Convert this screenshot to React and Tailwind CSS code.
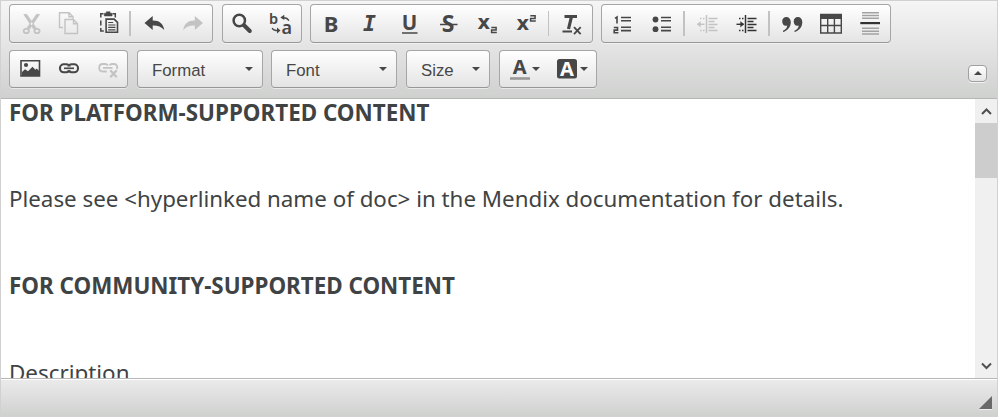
import React from "react";

const INK = "#474747";
const PALE = "#c3c3c3";

// Every icon is drawn in toolbar coordinates; x/y/w/h select its button cell.
function Icon({ x, y = 5, w = 39, h = 37, label, children }) {
  return (
    <button type="button" aria-label={label} className="block shrink-0">
      <svg width={w} height={h} viewBox={`${x} ${y} ${w} ${h}`} className="block overflow-visible" fill="none" stroke={INK}>
        {children}
      </svg>
    </button>
  );
}

const faces = {
  noto: "font-bold font-['Noto_Sans',sans-serif]",
  dejavu: "font-bold font-['DejaVu_Sans',sans-serif]",
  mono: "font-bold italic font-['DejaVu_Sans_Mono',monospace]",
};

function Glyph({ x, y, size, children, color = INK, face = "noto" }) {
  return (
    <text x={x} y={y} fontSize={size} fill={color} stroke="none" className={faces[face]}>
      {children}
    </text>
  );
}

const Sep = () => <span className="h-[25px] w-[2px] shrink-0 self-center bg-[#c2c2c2]" />;

const box =
  "flex shrink-0 items-center rounded-[4px] border border-[#a6a6a6] border-b-[#979797] bg-linear-to-b from-white to-[#e4e4e4] shadow-[0_1px_0_rgba(255,255,255,.5)]";

const Arrow = () => (
  <span className="h-0 w-0 border-x-4 border-t-4 border-x-transparent border-t-[#474747]" />
);

function Combo({ label, className }) {
  return (
    <button type="button" className={`${box} ${className} h-[38px] justify-between pl-[14px] pr-[9px] font-['Liberation_Sans',Arial,sans-serif] text-[16.8px] text-[#474747]`}>
      <span className="pt-[3px]">{label}</span>
      <Arrow />
    </button>
  );
}

function Indent({ x, color, right }) {
  return (
    <g stroke={color} strokeWidth="1.4">
      <path d={`M${x} 15v18`} strokeWidth="1.5" />
      <path d={`M${x + 2} 18.5h9M${x + 2} 21.5h6M${x + 2} 24.5h9M${x + 2} 27.5h6M${x + 2} 30.5h9`} />
      <path d={`M${x - 6.5} 18.5h5M${x - 6.5} 30.5h5`} strokeDasharray="1.5 1.5" />
      <path d={`M${x - 9} 24.3h7`} />
      <path
        d={right ? `M${x - 5} 21.5l3.5 2.8l-3.5 2.8z` : `M${x - 6} 21.5l-3.5 2.8l3.5 2.8z`}
        fill={color}
        strokeWidth=".3"
      />
    </g>
  );
}

export default function App() {
  return (
    <div className="flex h-[417px] w-[998px] flex-col overflow-hidden border border-[#d1d1d1] bg-white">
      <header className="flex h-[98px] shrink-0 flex-col gap-[7px] border-b border-[#b6b6b6] bg-linear-to-b from-[#f5f5f5] to-[#cfd1cf] px-2 pt-[3px]">
        <div className="flex">
          <div className={`${box} h-[39px] w-[204px] pl-[2px]`}>
            <Icon x={12} label="Cut">
              <g stroke={PALE} strokeWidth="1.8">
                <path d="M23.8 14.5l2.8-.3l9.7 14l-2.6 1zM39.5 14.5l-2.8-.3L27 28l2.6 1z" fill={PALE} strokeWidth=".7" />
                <ellipse cx="26.3" cy="31" rx="2.6" ry="2.2" />
                <ellipse cx="37" cy="31" rx="2.6" ry="2.2" />
              </g>
            </Icon>
            <Icon x={51} label="Copy">
              <g stroke={PALE} strokeWidth="1.4">
                <path d="M63 27.5h-3.5V12.7h9.5l4 4v2M69 12.7v4h4" />
                <path d="M65 19.5h8.5l4 4.2v9.8H65zM73.5 19.5v4.2h4" />
              </g>
            </Icon>
            <Icon x={90} label="Paste">
              <path d="M103.5 13.8h-2.7v3.7M100.8 20.5v5M100.8 28v3h3M112.5 13.8h2.8v3.7" strokeWidth="1.5" />
              <path d="M104.3 16v-2.7h2v-1.5h3.8v1.5h2V16z" fill={INK} strokeWidth=".5" />
              <path d="M106.1 19.1h8l3.4 3.2v10h-11.4z" strokeWidth="1.6" />
              <path d="M108.2 22.5h5M108.2 25h7.3M108.2 27.4h7.3M108.2 29.9h7.3" strokeWidth="1.2" />
            </Icon>
            <Sep />
            <Icon x={131} label="Undo">
              <path d="M144.5 23l8.2-7v4.4c6.5-.1 10.8 3.2 11.5 9.5c-3-3.6-6.8-4.7-11.5-4.5V30z" fill={INK} stroke="none" />
            </Icon>
            <Icon x={170} label="Redo">
              <path d="M203 23l-8.2-7v4.4c-6.5-.1-10.8 3.2-11.5 9.5c3-3.6 6.8-4.7 11.5-4.5V30z" fill={PALE} stroke="none" />
            </Icon>
          </div>

          <div className={`${box} ml-[9px] h-[39px] w-[80px]`}>
            <Icon x={223} label="Find">
              <circle cx="239.3" cy="20.5" r="5.7" strokeWidth="2.5" />
              <path d="M244 25.3l5.8 5.7" strokeWidth="4" strokeLinecap="round" />
            </Icon>
            <Icon x={262} label="Replace">
              <Glyph x={269} y={23.7} size={14.5}><tspan className="font-semibold">b</tspan></Glyph>
              <Glyph x={281.6} y={34.3} size={18}><tspan className="font-semibold">a</tspan></Glyph>
              <path d="M282.5 17.8c3.5-.2 5.5 1 6.3 3M272.2 28c.5 2 2.5 2.6 6 2.6" strokeWidth="1.4" />
              <path d="M280.3 17.5l4-2.8v5.4zM280.5 30.5l-3.5-3v6z" fill={INK} stroke="none" />
            </Icon>
          </div>

          <div className={`${box} ml-[8px] h-[39px] w-[283px]`}>
            <Icon x={311} label="Bold"><Glyph x={323.7} y={31.5} size={22}>B</Glyph></Icon>
            <Icon x={350} label="Italic"><Glyph x={363} y={31.3} size={21.5} face="mono">I</Glyph></Icon>
            <Icon x={389} label="Underline">
              <Glyph x={401.8} y={29.7} size={20.5}>U</Glyph>
              <path d="M402 33h15.5" strokeWidth="1.5" />
            </Icon>
            <Icon x={428} label="Strikethrough">
              <Glyph x={441.8} y={31.6} size={23}>S</Glyph>
              <path d="M440 24.5h17.5" strokeWidth="1.5" />
            </Icon>
            <Icon x={467} label="Subscript">
              <Glyph x={477.5} y={29} size={19.5} face="dejavu">x</Glyph>
              <path d="M491.3 27.5h4.8v2.6h-4.5v2.5h5.2" strokeWidth="1.5" />
            </Icon>
            <Icon x={506} w={42} label="Superscript">
              <Glyph x={516.5} y={30.3} size={19.5} face="dejavu">x</Glyph>
              <path d="M530.3 15.8h4.8v2.6h-4.5v2.5h5.2" strokeWidth="1.5" />
            </Icon>
            <span className="h-[25px] w-px shrink-0 bg-[#c2c2c2]" />
            <Icon x={549} label="Remove format">
              <path d="M564.5 16.5h12.5M571.5 16.5l-3 12.5" strokeWidth="3.2" />
              <path d="M562.5 31.5h9.5M574 27.2l6.7 7M580.7 27.2l-6.7 7" strokeWidth="1.8" />
            </Icon>
          </div>

          <div className={`${box} ml-[8px] h-[39px] w-[290px]`}>
            <Icon x={602} label="Numbered list">
              <path d="M615 18.3l2-1.3v6.5M613.8 27.5h3.7v2.6h-3.3v2.7h4.2" strokeWidth="1.6" />
              <path d="M621 17.5h10M621 20.7h10M621 27.3h10M621 30.6h10" strokeWidth="1.6" />
            </Icon>
            <Icon x={641} w={42} label="Bulleted list">
              <circle cx="655.5" cy="19.5" r="2.9" fill={INK} stroke="none" />
              <circle cx="655.5" cy="29.2" r="2.9" fill={INK} stroke="none" />
              <path d="M661 17.5h10M661 20.7h10M661 27.3h10M661 30.6h10" strokeWidth="1.6" />
            </Icon>
            <Sep />
            <Icon x={685} label="Decrease indent"><Indent x={706.5} color={PALE} /></Icon>
            <Icon x={724} w={44} label="Increase indent"><Indent x={745.5} color="#333" right /></Icon>
            <Sep />
            <Icon x={770} label="Block quote">
              {[782, 793.5].map((x) => (
                <path key={x} transform={`translate(${x} 17)`} d="M4.3 0C7 0 8.8 2 8.8 5c0 4.7-3 8.8-7.8 10v-1.2c2.7-1.2 4.2-3.3 4.2-5.3C2.2 9.7.2 7.2.2 4.2C.2 1.7 2 0 4.3 0z" fill={INK} stroke="none" />
              ))}
            </Icon>
            <Icon x={809} label="Table">
              <path d="M820.7 14.5h20.6V33H820.7zM820.7 25.5h20.6M827.7 19v14M834.4 19v14" strokeWidth="1.4" />
              <path d="M820 14h22v5h-22z" fill={INK} stroke="none" />
            </Icon>
            <Icon x={848} label="Horizontal line">
              <path d="M862 12.7h17M862 15.5h17M862 18.3h17M862 28.3h17M862 31.2h17M862 34h17" stroke="#a2a2a2" strokeWidth="1.4" />
              <path d="M860.3 23.1h19.7" stroke="#333" strokeWidth="2.2" />
            </Icon>
          </div>
        </div>

        <div className="flex">
          <div className={`${box} h-[38px] w-[119px]`}>
            <Icon x={10} y={51} h={36} label="Image">
              <path d="M21 60.8h18.5V76H21z" strokeWidth="1.6" />
              <circle cx="26" cy="65" r="2.1" fill={INK} stroke="none" />
              <path d="M22 76v-4l3-2.7l3 2l4.5-4.6l2.8 3l1.5-1.2l2.3 2.5v5z" fill={INK} stroke="none" />
            </Icon>
            <Icon x={49} y={51} h={36} label="Link">
              <rect x="60" y="64.3" width="10" height="8" rx="3.8" strokeWidth="2.1" />
              <rect x="68" y="64.3" width="10" height="8" rx="3.8" strokeWidth="2.1" />
              <path d="M64 68.3h10" stroke="#f5f5f5" strokeWidth="3.6" />
              <path d="M64 68.3h10" strokeWidth="1.7" />
            </Icon>
            <Icon x={88} y={51} h={36} label="Unlink">
              <g stroke={PALE}>
                <path d="M108 65.5c-.8-1-1.6-1.5-3-1.5h-2.2c-4.8 0-4.8 7.5 0 7.5h4M109.5 65.3c.6-.9 1.4-1.3 2.5-1.3h1.8c3.4 0 4.2 3.4 2.8 5M103 67.8h9.5" strokeWidth="1.8" />
                <path d="M110.3 70.3l6.4 7M116.7 70.3l-6.4 7" strokeWidth="2.2" />
              </g>
            </Icon>
          </div>
          <Combo label="Format" className="ml-[9px] w-[126px]" />
          <Combo label="Font" className="ml-[8px] w-[126px]" />
          <Combo label="Size" className="ml-[9px] w-[84px]" />
          <div className={`${box} ml-[9px] h-[38px] w-[98px]`}>
            <Icon x={500} y={51} w={32} h={36} label="Text color">
              <Glyph x={512.7} y={74.2} size={20}>A</Glyph>
              <path d="M510 78.5h20" stroke="#999" strokeWidth="2.6" />
            </Icon>
            <Arrow />
            <Icon x={540} y={51} w={40} h={36} label="Background color">
              <rect x="557" y="59" width="20" height="19.5" rx="2.5" fill={INK} stroke="none" />
              <Glyph x={560.1} y={76} size={20} color="#fff">A</Glyph>
            </Icon>
            <Arrow />
          </div>
          <button type="button" aria-label="Collapse toolbar" className="ml-auto mt-[15px] mr-[2px] flex h-[17px] w-[19px] items-center justify-center rounded-[4px] border border-[#a0a0a0] bg-linear-to-b from-white to-[#e4e4e4] shadow-[0_1px_0_rgba(255,255,255,.7)]">
            <span className="mb-px border-x-4 border-b-4 border-x-transparent border-b-[#474747]" />
          </button>
        </div>
      </header>

      <div className="flex h-[279px] shrink-0">
        <main className="h-full flex-1 overflow-hidden pl-2 font-['Noto_Sans','Open_Sans',sans-serif] text-[22.4px] leading-[27px] whitespace-nowrap text-[#404344]">
          <p className="h-[86px] font-bold">FOR PLATFORM-SUPPORTED CONTENT</p>
          <p className="h-[87px] text-[22.34px]">Please see &lt;hyperlinked name of doc&gt; in the Mendix documentation for details.</p>
          <p className="h-[87px] font-bold">FOR COMMUNITY-SUPPORTED CONTENT</p>
          <p>Description</p>
        </main>
        <div className="flex w-[22px] flex-col bg-[#f0f0f0]">
          <svg className="h-6 w-[22px] shrink-0" viewBox="0 0 22 24" fill="none" stroke="#505050" strokeWidth="2"><path d="M7 15l4.5-4.5L16 15" /></svg>
          <div className="h-[55px] bg-[#cdcdcd]" />
          <svg className="mt-auto h-6 w-[22px] shrink-0" viewBox="0 0 22 24" fill="none" stroke="#505050" strokeWidth="2"><path d="M7 9.5l4.5 4.5L16 9.5" /></svg>
        </div>
      </div>

      <footer className="flex flex-1 items-end justify-end border-t border-[#b6b6b6] bg-linear-to-b from-[#ebebeb] to-[#cfd1cf] pr-[5px] pb-[7px] shadow-[inset_0_1px_0_#fff]">
        <svg width="13" height="13" viewBox="0 0 13 13" className="drop-shadow-[0_1px_0_#eee]"><path d="M13 0v13H0z" fill="#696969" /></svg>
      </footer>
    </div>
  );
}
